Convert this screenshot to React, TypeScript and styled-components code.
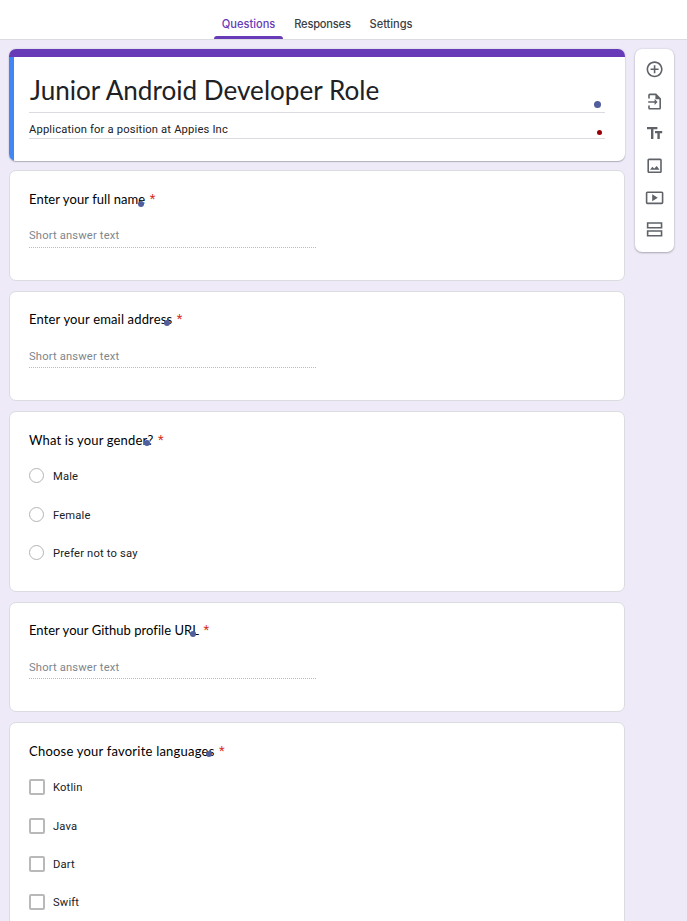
import React from 'react';
import styled, { createGlobalStyle } from 'styled-components';

const GlobalStyle = createGlobalStyle`
  * { box-sizing: border-box; }
  body { margin: 0; background: #eeeaf8; overflow: hidden; }
`;

const Page = styled.div`
  height: 921px;
  overflow: hidden;
  background: #eeeaf8;
  font-family: Roboto, sans-serif;
  font-size: 11.2px;
  letter-spacing: 0.17px;
  color: #202124;
`;

const TabBar = styled.nav`
  display: flex;
  height: 40px;
  padding-left: 214px;
  background: #fff;
  border-bottom: 1px solid #dadce0;
`;

const Tab = styled.div<{ $active?: boolean; $width: number; $spacing: number }>`
  display: flex;
  flex-direction: column;
  align-items: center;
  justify-content: space-between;
  width: ${(p) => p.$width}px;
  padding-top: 16px;
  font: 500 11.1px/16px Inter, sans-serif;
  letter-spacing: ${(p) => p.$spacing}px;
  color: ${(p) => (p.$active ? '#673ab7' : '#3c4043')};
`;

const TabIndicator = styled.span`
  width: 69px;
  height: 3px;
  border-radius: 3px 3px 0 0;
  background: #673ab7;
`;

const Workspace = styled.main`
  display: flex;
  align-items: flex-start;
  gap: 10px;
  padding: 9px 0 0 9px;
`;

const Form = styled.div`
  display: flex;
  flex-direction: column;
  gap: 10px;
  width: 616px;
`;

const HeaderCard = styled.section`
  height: 112px;
  margin-bottom: -1px;
  border-radius: 7px;
  background: #fff;
  overflow: hidden;
  box-shadow: 0 1px 1px rgba(60, 64, 67, 0.3), 0 0 2px rgba(60, 64, 67, 0.2);
`;

const Accent = styled.div`
  height: 8px;
  background: #673ab7;
`;

const HeaderBody = styled.div`
  height: 104px;
  padding: 14px 20px 0 15px;
  border-left: 5px solid #4285f4;
`;

const Title = styled.h1`
  position: relative;
  height: 42px;
  margin: 0;
  padding-left: 1px;
  border-bottom: 1px solid #dadce0;
  font: 400 26.1px/39px Lato, sans-serif;
  letter-spacing: 0.01px;
`;

const Description = styled.p`
  position: relative;
  height: 26px;
  margin: 0;
  padding-top: 9px;
  border-bottom: 1px solid #dadce0;
  line-height: 15px;
`;

const Dot = styled.i<{ $x: number; $y: number; $size: number; $color?: string }>`
  position: absolute;
  left: ${(p) => p.$x}px;
  top: ${(p) => p.$y}px;
  width: ${(p) => p.$size}px;
  height: ${(p) => p.$size}px;
  border-radius: 50%;
  background: ${(p) => p.$color ?? '#505e9b'};
`;

const Card = styled.section<{ $height: number }>`
  height: ${(p) => p.$height}px;
  padding: 18px 19px 0;
  border: 1px solid #dadce0;
  border-radius: 7px;
  background: #fff;
`;

const Question = styled.h2<{ $spacing: number; $shift?: number }>`
  position: relative;
  display: flex;
  gap: 4.5px;
  height: 20px;
  margin: ${(p) => p.$shift ?? 0}px 0 0;
  font: 400 13px/20px Lato, sans-serif;
  letter-spacing: ${(p) => p.$spacing}px;
  color: #000;
  white-space: nowrap;
`;

const Required = styled.span`
  font: 400 13px/20px Roboto, sans-serif;
  color: #d93025;
`;

const ShortAnswer = styled.div<{ $lead: number; $height: number }>`
  width: 287px;
  height: ${(p) => p.$height}px;
  margin-top: ${(p) => p.$lead}px;
  border-bottom: 1px dotted #b9bbbe;
  line-height: 15px;
  color: #80868b;
`;

const Options = styled.div`
  display: flex;
  flex-direction: column;
  gap: 18.4px;
  margin-top: 16.8px;
`;

const Option = styled.label`
  display: flex;
  align-items: center;
  height: 20px;
`;

const Radio = styled.span`
  width: 15px;
  height: 15px;
  margin: -2.2px 9px 0 0;
  border: 1px solid #b4b4b4;
  border-radius: 50%;
`;

const Check = styled.span`
  width: 16px;
  height: 16px;
  margin: -1.2px 8px 0 0;
  border: 2px solid #b9b9b9;
  border-radius: 2px;
`;

const Toolbar = styled.aside`
  display: flex;
  flex-direction: column;
  align-items: center;
  width: 39px;
  height: 203px;
  padding-top: 5px;
  border-radius: 7px;
  background: #fff;
  box-shadow: 0 1px 2px rgba(60, 64, 67, 0.35), 0 0 2px rgba(60, 64, 67, 0.15);
`;

const Tool = styled.button<{ $offset: number }>`
  display: grid;
  place-items: center;
  width: 32px;
  height: 32px;
  padding: 0;
  border: 0;
  background: none;
  color: #5f6368;

  svg {
    width: 19.2px;
    height: 19.2px;
    overflow: visible;
    transform: translateY(${(p) => p.$offset}px);
  }
`;

const icons = [
  {
    name: 'Add question',
    offset: -0.3,
    d: 'M13 7h-2v4H7v2h4v4h2v-4h4v-2h-4V7zm-1-5C6.48 2 2 6.48 2 12s4.48 10 10 10 10-4.48 10-10S17.52 2 12 2zm0 18c-4.41 0-8-3.59-8-8s3.59-8 8-8 8 3.59 8 8-3.59 8-8 8z',
  },
  {
    name: 'Import questions',
    offset: 0,
    d: 'M14 2H6c-1.1 0-2 .9-2 2v4h2V4h7v5h5v11H6v-3H4v3c0 1.1.9 2 2 2h12c1.1 0 2-.9 2-2V8l-6-6zM12 16.2l3.7-3.7L12 8.8v2.8H4v1.8h8v2.8z',
  },
  { name: 'Add title', offset: -0.3, d: 'M2.5 4v3h5v12h3V7h5V4h-13zm19 5h-9v3h3v7h3v-7h3V9z' },
  {
    name: 'Add image',
    offset: 0.2,
    d: 'M19 5v14H5V5h14m0-2H5c-1.1 0-2 .9-2 2v14c0 1.1.9 2 2 2h14c1.1 0 2-.9 2-2V5c0-1.1-.9-2-2-2zM14.7 12.3l-3.2 3-2.3-2L6.3 17h11.9l-3.5-4.7z',
  },
  {
    name: 'Add video',
    offset: 0.2,
    d: 'M9 7.6v8.8l7-4.4-7-4.4zM21 4H3c-1.1 0-2 .9-2 2v12c0 1.1.9 2 2 2h18c1.1 0 2-.9 2-2V6c0-1.1-.9-2-2-2zm0 14H3V6h18v12z',
  },
  {
    name: 'Add section',
    offset: -0.2,
    d: 'M2.3 3v8h19.4V3H2.3zm17.4 6H4.3V5h15.4v4zM2.3 13v8h19.4v-8H2.3zm17.4 6H4.3v-4h15.4v4z',
  },
];

type QuestionData = {
  text: string;
  spacing: number;
  height: number;
  dot: [number, number];
  lead?: number;
  answerHeight?: number;
  shift?: number;
  kind?: 'radio' | 'check';
  options?: string[];
};

const questions: QuestionData[] = [
  { text: 'Enter your full name', spacing: 0.07, height: 111, dot: [109, 12], lead: 19 },
  {
    text: 'Enter your email address', spacing: 0.16, height: 110, dot: [135, 11],
    lead: 20, answerHeight: 19, shift: -1,
  },
  {
    text: 'What is your gender?', spacing: 0.16, height: 181, dot: [115, 10],
    kind: 'radio', options: ['Male', 'Female', 'Prefer not to say'],
  },
  {
    text: 'Enter your Github profile URL', spacing: 0.03, height: 110, dot: [161, 11],
    lead: 20, answerHeight: 19, shift: -1,
  },
  {
    text: 'Choose your favorite languages', spacing: 0.22, height: 240, dot: [176.5, 10],
    kind: 'check', options: ['Kotlin', 'Java', 'Dart', 'Swift'],
  },
];

function QuestionCard({ q }: { q: QuestionData }) {
  const Mark = q.kind === 'radio' ? Radio : Check;
  return (
    <Card $height={q.height}>
      <Question $spacing={q.spacing} $shift={q.shift}>
        {q.text}
        <Required>*</Required>
        <Dot $x={q.dot[0]} $y={q.dot[1]} $size={6} />
      </Question>
      {q.options ? (
        <Options>
          {q.options.map((o) => (
            <Option key={o}><Mark />{o}</Option>
          ))}
        </Options>
      ) : (
        <ShortAnswer $lead={q.lead ?? 19} $height={q.answerHeight ?? 20}>Short answer text</ShortAnswer>
      )}
    </Card>
  );
}

export default function App() {
  return (
    <Page>
      <GlobalStyle />
      <TabBar>
        <Tab $active $width={69} $spacing={0}>Questions<TabIndicator /></Tab>
        <Tab $width={79} $spacing={-0.2}>Responses</Tab>
        <Tab $width={58} $spacing={-0.05}>Settings</Tab>
      </TabBar>
      <Workspace>
        <Form>
          <HeaderCard>
            <Accent />
            <HeaderBody>
              <Title>
                Junior Android Developer Role
                <Dot $x={565} $y={30} $size={7} />
              </Title>
              <Description>
                Application for a position at Appies Inc
                <Dot $x={568} $y={17} $size={5} $color="#990005" />
              </Description>
            </HeaderBody>
          </HeaderCard>
          {questions.map((q) => <QuestionCard key={q.text} q={q} />)}
        </Form>
        <Toolbar>
          {icons.map((icon) => (
            <Tool key={icon.name} $offset={icon.offset} aria-label={icon.name}>
              <svg viewBox="0 0 24 24" fill="currentColor"><path d={icon.d} /></svg>
            </Tool>
          ))}
        </Toolbar>
      </Workspace>
    </Page>
  );
}
